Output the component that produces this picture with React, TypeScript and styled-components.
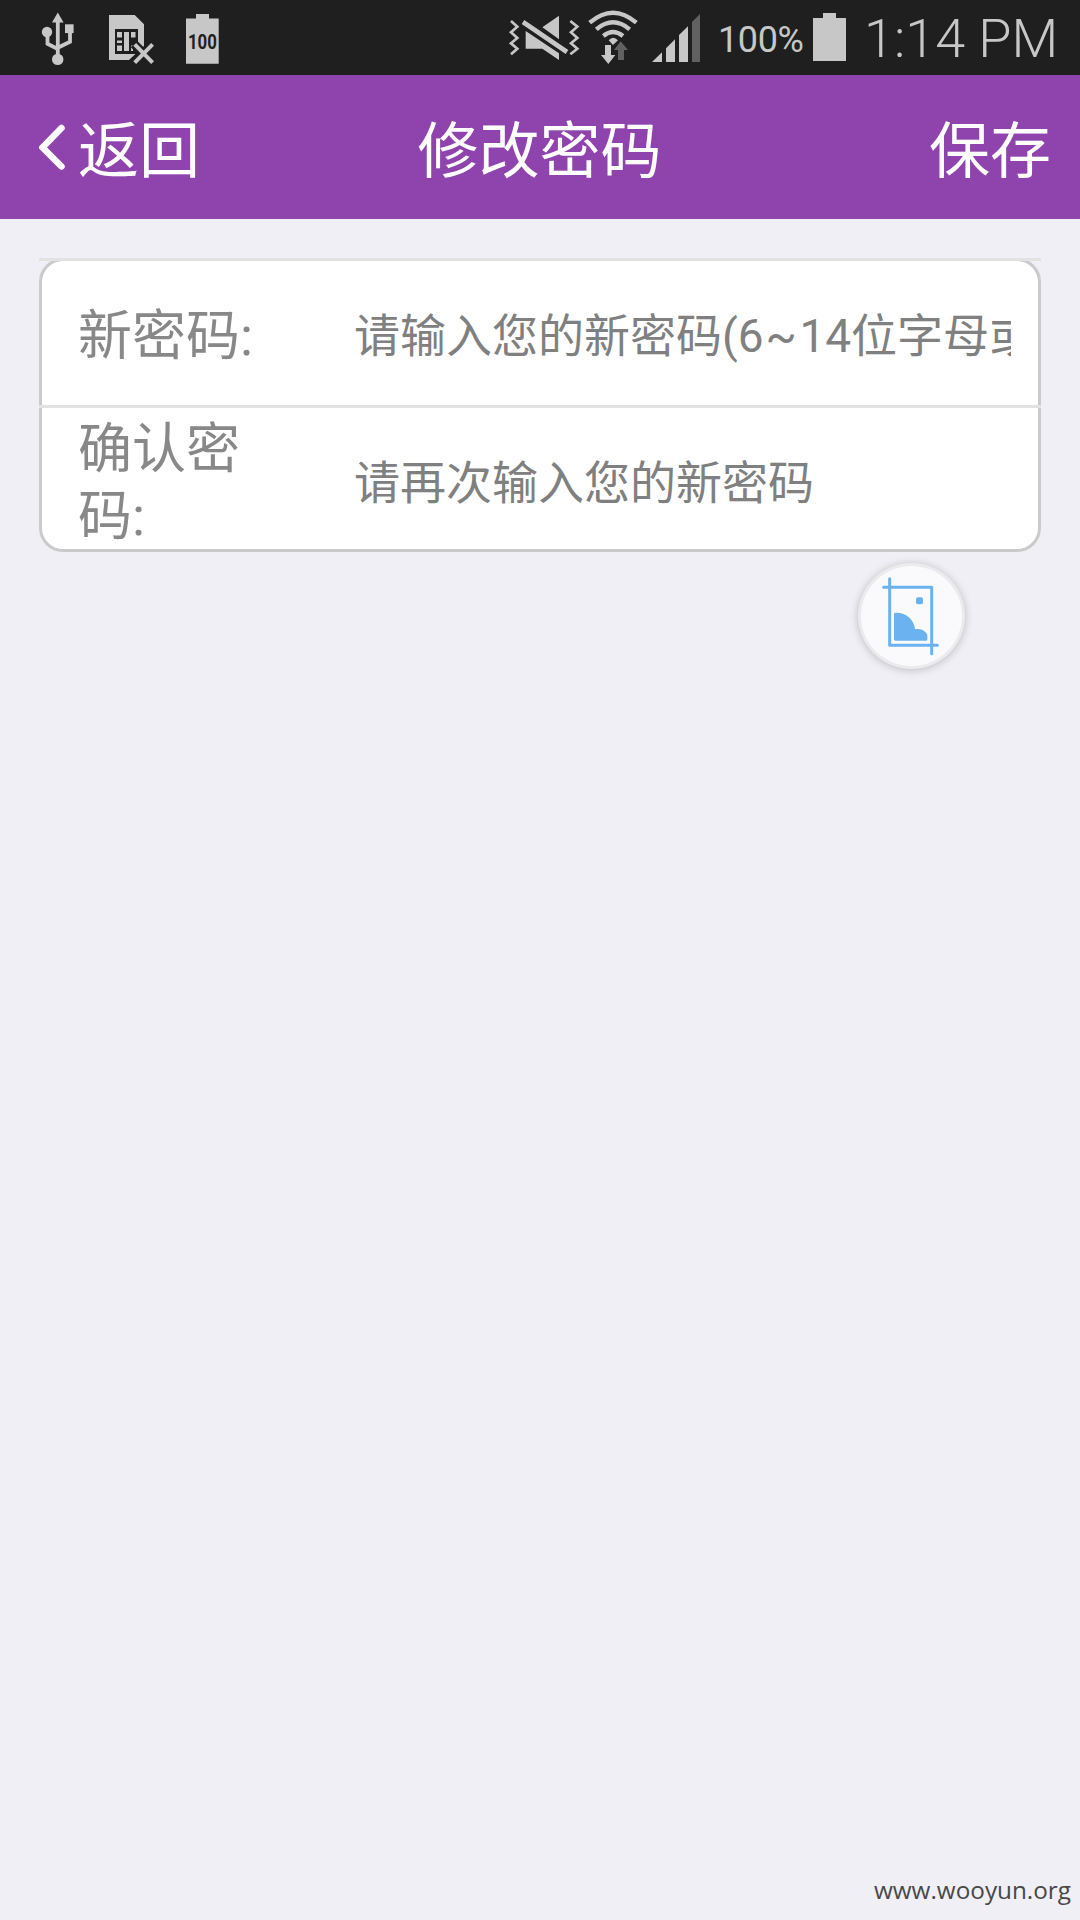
import React from "react";
import styled, { createGlobalStyle } from "styled-components";

const GlobalStyle = createGlobalStyle`
  * { box-sizing: border-box; }
  body {
    margin: 0;
    background: #f0eff5;
    font-family: Roboto, "Noto Sans CJK SC", sans-serif;
  }
`;

const Screen = styled.div`
  position: relative;
  display: flex;
  flex-direction: column;
  width: 1080px;
  height: 1920px;
  overflow: hidden;
  background: #f0eff5;
`;

const StatusBar = styled.div`
  display: flex;
  justify-content: space-between;
  height: 75px;
  padding: 0 25px 0 38px;
  background: #1f1f1f;
  color: #c7c7c7;
`;

const StatusGroup = styled.div`
  display: flex;
  height: 75px;
`;

const StatusIcon = styled.svg<{ $gap?: number }>`
  display: block;
  flex: none;
  height: 75px;
  margin-right: ${(p) => p.$gap ?? 0}px;
  fill: #c7c7c7;
`;

const BatteryLevel = styled.span`
  width: 95px;
  font-size: 36px;
  letter-spacing: -0.4px;
  line-height: 80px;
  white-space: nowrap;
`;

const Clock = styled.span`
  width: 191px;
  font-size: 54px;
  font-weight: 300;
  line-height: 77px;
  text-align: right;
  white-space: nowrap;
`;

const Header = styled.header`
  display: grid;
  grid-template-columns: 1fr auto 1fr;
  align-items: center;
  height: 144px;
  padding: 0 29px 0 39px;
  background: #8e43ad;
  color: #fff;
  font-size: 61px;
  line-height: 144px;
`;

const BackButton = styled.div`
  display: flex;
  align-items: center;
`;

const BackChevron = styled.svg`
  display: block;
  width: 39px;
  height: 144px;
  fill: none;
  stroke: #fff;
`;

const HeaderText = styled.span`
  padding-top: 11px;
  line-height: 133px;
`;

const Title = styled.h1`
  margin: 0 11px 0 0;
  padding-top: 11px;
  font-size: 61px;
  font-weight: 400;
  line-height: 133px;
`;

const SaveButton = styled.div`
  padding-top: 11px;
  line-height: 133px;
  text-align: right;
`;

const FormCard = styled.section`
  display: flex;
  flex-direction: column;
  margin: 39px 39px 0;
  background: linear-gradient(#e2e2e2, #e2e2e2) top / 100% 3px no-repeat;
`;

const TopRow = styled.div`
  height: 147px;
  overflow: hidden;
  clip-path: inset(3px 0 0 0);
  background: #f0eff5;
`;

const RowBox = styled.div<{ $last?: boolean }>`
  display: flex;
  align-items: center;
  width: 100%;
  height: ${(p) => (p.$last ? 144 : 174)}px;
  padding: ${(p) => (p.$last ? "9px 27px 0 36px" : "9px 27px 27px 36px")};
  background: #fff;
  border: 0 solid #cacaca;
  border-width: ${(p) => (p.$last ? "0 3px 3px" : "3px")};
  border-radius: ${(p) => (p.$last ? "0 0 24px 24px" : "24px")};
`;

const Divider = styled.div`
  height: 3px;
  background: #e2e2e2;
`;

const Label = styled.label`
  flex: none;
  width: 200px;
  margin-right: 76px;
  color: #888;
  font-size: 54px;
  line-height: 67px;
`;

const Field = styled.div`
  flex: 1;
  overflow: hidden;
  color: #808080;
  font-size: 46px;
  line-height: 67px;
  white-space: nowrap;
`;

const Tilde = styled.span`
  padding: 0 2.5px 0 2px;
`;

const CaptureButton = styled.div`
  position: absolute;
  left: 858px;
  top: 563px;
  width: 107px;
  height: 106px;
  border: 3px solid #ebebee;
  border-radius: 50%;
  background: #fafafd;
  box-shadow: 0 1px 8px rgba(0, 0, 0, 0.22);
`;

const CaptureIcon = styled.svg`
  display: block;
  width: 100px;
  height: 100px;
  fill: #6bb3f0;
`;

const SiteMark = styled.footer`
  margin-top: auto;
  padding: 0 9px 14px 0;
  color: #484848;
  font-family: "Open Sans", "Noto Sans", sans-serif;
  font-size: 24.3px;
  line-height: 33px;
  text-align: right;
`;

const UsbIcon = () => (
  <StatusIcon width="40" viewBox="38 0 40 75" $gap={31}>
    <path d="M57.8 12.5 63.6 22.5H52Z" />
    <circle cx="47" cy="32" r="5.2" />
    <rect x="65" y="24.3" width="8.6" height="8.8" />
    <circle cx="57.7" cy="59.4" r="5.7" />
    <path d="M57.8 20V58M47.5 34V43.8L57.8 49M70 32V41.8L57.8 47.8" fill="none" stroke="#c7c7c7" strokeWidth="3.8" />
  </StatusIcon>
);

const SimIcon = () => (
  <StatusIcon width="46" viewBox="109 0 46 75" $gap={31}>
    <path d="M109 15H134.7L144 24.3V46L129 60H109Z" />
    <path d="M115 29H138V54H115Z" fill="#1f1f1f" />
    <path d="M117 32H122V37.5H117ZM117 40.5H122V43H117ZM117 45.5H122V51H117ZM124 32H129V51H124ZM131 32H135.5V37.5H131ZM131 45.5H133V51H131Z" />
    <path d="M134 44 153 63M153 44 134 63" fill="none" stroke="#1f1f1f" strokeWidth="9" />
    <path d="M134.7 44.4 152.6 62.6M152.6 44.4 134.7 62.6" fill="none" stroke="#c7c7c7" strokeWidth="4" />
  </StatusIcon>
);

const BatteryFullIcon = () => (
  <StatusIcon width="33" viewBox="186 0 33 75">
    <path d="M196 14H209V18.5H218.7V63.7H186V18.5H196Z" />
    <text x="202.4" y="48.7" textAnchor="middle" fontSize="20" fontWeight="700" fontFamily="Roboto, sans-serif" textLength="29" lengthAdjust="spacingAndGlyphs" fill="#1f1f1f">
      100
    </text>
  </StatusIcon>
);

const MuteIcon = () => (
  <StatusIcon width="71" viewBox="27 0 213 225" $gap={8}>
    <g transform="translate(-30 0)">
      <path d="M207 47V118L157 82ZM107 93 207 160V180L157 146H107Z" />
      <path d="M99 66 231 156" stroke="#c7c7c7" strokeWidth="14" />
      <path d="M63 63 82 80 63 97 82 114 63 130 82 146 63 163M241 63 262 80 243 97 262 114 243 130 262 146 241 163" fill="none" stroke="#c7c7c7" strokeWidth="8" />
    </g>
  </StatusIcon>
);

const WifiIcon = () => (
  <StatusIcon width="50" viewBox="294 0 150 225" $gap={14}>
    <path d="M299 68Q369 8 439 68M319 88Q369 46 419 88M340 108Q369 84 399 108" fill="none" stroke="#c7c7c7" strokeWidth="13" />
    <path d="M356 121Q369 106 384 121L369 135Z" />
    <path d="M392 124 414 150H402V180H384V150H372Z" fill="#616161" />
    <path d="M345 135H363V165H376L355 192 333 165H345Z" />
  </StatusIcon>
);

const SignalIcon = () => (
  <StatusIcon width="48" viewBox="486 0 144 225" $gap={18}>
    <path d="M486 186 516 157V186ZM528 186V145L555 118V186ZM567 186V105L594 79V186Z" />
    <path d="M606 186V66L630 42V186Z" fill="#616161" />
  </StatusIcon>
);

const ChargeIcon = () => (
  <StatusIcon width="33" viewBox="813 0 33 75" $gap={18}>
    <path d="M823 13H836V18H846V61H813V18H823Z" />
  </StatusIcon>
);

export default function App() {
  return (
    <>
      <GlobalStyle />
      <Screen>
        <StatusBar>
          <StatusGroup>
            <UsbIcon />
            <SimIcon />
            <BatteryFullIcon />
          </StatusGroup>
          <StatusGroup>
            <MuteIcon />
            <WifiIcon />
            <SignalIcon />
            <BatteryLevel>100%</BatteryLevel>
            <ChargeIcon />
            <Clock>1:14 PM</Clock>
          </StatusGroup>
        </StatusBar>
        <Header>
          <BackButton>
            <BackChevron viewBox="39 75 39 144">
              <path d="M61.5 128 42.5 147.5 61.5 166.5" strokeWidth="6.5" strokeLinecap="round" />
            </BackChevron>
            <HeaderText>返回</HeaderText>
          </BackButton>
          <Title>修改密码</Title>
          <SaveButton>保存</SaveButton>
        </Header>
        <FormCard>
          <TopRow>
            <RowBox>
              <Label>新密码:</Label>
              <Field>
                请输入您的新密码(6<Tilde>~</Tilde>14位字母或
              </Field>
            </RowBox>
          </TopRow>
          <Divider />
          <RowBox $last>
            <Label>确认密码:</Label>
            <Field>请再次输入您的新密码</Field>
          </RowBox>
        </FormCard>
        <CaptureButton>
          <CaptureIcon viewBox="66 78 300 300">
            <path d="M152 116V316H295M134 142H278V341" fill="none" stroke="#6bb3f0" strokeWidth="9" strokeLinejoin="round" strokeLinecap="round" />
            <rect x="231" y="172" width="21" height="21" rx="6" />
            <path d="M165 222Q165 218 172 218C203 218 226 240 228 268 246 263 265 276 265 287V298Q265 302 261 302H169Q165 302 165 298Z" />
          </CaptureIcon>
        </CaptureButton>
        <SiteMark>www.wooyun.org</SiteMark>
      </Screen>
    </>
  );
}
